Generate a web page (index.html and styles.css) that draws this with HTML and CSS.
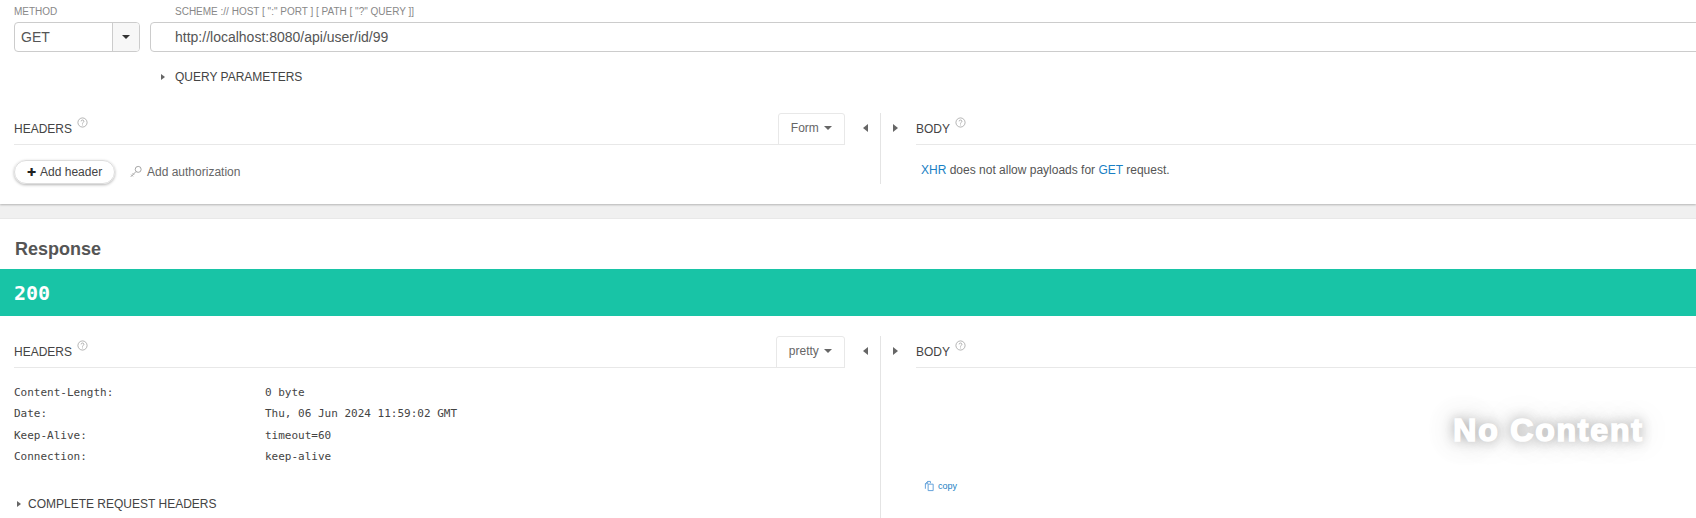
FILE: index.html
```html
<!DOCTYPE html>
<html lang="en">
<head>
<meta charset="utf-8">
<title>Response</title>
<link rel="stylesheet" href="styles.css">
</head>
<body>
<section class="request">
  <div class="url-row">
    <div class="method">
      <div class="label">METHOD</div>
      <div class="select"><span class="select-value">GET</span><span class="select-btn"><i class="caret"></i></span></div>
    </div>
    <div class="url">
      <div class="label url-label">SCHEME :// HOST [ ":" PORT ] [ PATH [ "?" QUERY ]]</div>
      <div class="url-input">http://localhost:8080/api/user/id/99</div>
    </div>
  </div>
  <div class="query"><i class="tri-right small"></i><span>QUERY PARAMETERS</span></div>
  <div class="split split-req">
    <div class="pane-left">
      <div class="pane-main">
        <div class="pane-head">
          <span class="pane-title">HEADERS</span>
          <svg class="help" viewBox="0 0 12 12"><circle cx="6" cy="6" r="5" /><path d="M4.5 4.8a1.5 1.5 0 1 1 2.2 1.3c-.5.3-.7.5-.7 1.1M6 8.2v1" /></svg>
          <span class="tab">Form <i class="caret grey"></i></span>
        </div>
        <div class="actions">
          <span class="add-btn"><b class="plus">✚</b>Add header</span>
          <svg class="key" viewBox="0 0 16 16"><circle cx="10.5" cy="5" r="3.4"/><path d="M8 7.5 2 13.5M2.5 11l2 2M4.2 9.5l1.6 1.6"/></svg>
          <span class="auth">Add authorization</span>
        </div>
      </div>
      <div class="toggle toggle-l"><i class="tri-left"></i></div>
    </div>
    <div class="pane-right">
      <div class="toggle toggle-r"><i class="tri-right"></i></div>
      <div class="pane-main grow">
        <div class="pane-head">
          <span class="pane-title">BODY</span>
          <svg class="help" viewBox="0 0 12 12"><circle cx="6" cy="6" r="5" /><path d="M4.5 4.8a1.5 1.5 0 1 1 2.2 1.3c-.5.3-.7.5-.7 1.1M6 8.2v1" /></svg>
        </div>
        <p class="xhr"><a>XHR</a> does not allow payloads for <a>GET</a> request.</p>
      </div>
    </div>
  </div>
</section>
<div class="band"></div>
<section class="response">
  <h2 class="resp-title">Response</h2>
  <div class="status">200</div>
  <div class="split split-res">
    <div class="pane-left">
      <div class="pane-main">
        <div class="pane-head">
          <span class="pane-title">HEADERS</span>
          <svg class="help" viewBox="0 0 12 12"><circle cx="6" cy="6" r="5" /><path d="M4.5 4.8a1.5 1.5 0 1 1 2.2 1.3c-.5.3-.7.5-.7 1.1M6 8.2v1" /></svg>
          <span class="tab tab-wide">pretty <i class="caret grey"></i></span>
        </div>
        <dl class="rows">
          <dt>Content-Length:</dt><dd>0 byte</dd>
          <dt>Date:</dt><dd>Thu, 06 Jun 2024 11:59:02 GMT</dd>
          <dt>Keep-Alive:</dt><dd>timeout=60</dd>
          <dt>Connection:</dt><dd>keep-alive</dd>
        </dl>
        <div class="complete"><i class="tri-right small"></i><span>COMPLETE REQUEST HEADERS</span></div>
      </div>
      <div class="toggle toggle-l"><i class="tri-left"></i></div>
    </div>
    <div class="pane-right">
      <div class="toggle toggle-r"><i class="tri-right"></i></div>
      <div class="pane-main grow">
        <div class="pane-head">
          <span class="pane-title">BODY</span>
          <svg class="help" viewBox="0 0 12 12"><circle cx="6" cy="6" r="5" /><path d="M4.5 4.8a1.5 1.5 0 1 1 2.2 1.3c-.5.3-.7.5-.7 1.1M6 8.2v1" /></svg>
        </div>
        <div class="body-view">
          <div class="copy">
            <svg class="copy-icon" viewBox="0 0 12 12"><path d="M1.5 9V3.5L4 1h3v2"/><path d="M4.5 4h5.5v7H4.5z"/><path d="M4 1v2.500H1.500"/></svg>
            <span>copy</span>
          </div>
          <div class="no-content"><span>No Content</span></div>
        </div>
      </div>
    </div>
  </div>
</section>
</body>
</html>
```
FILE: styles.css
```css
* { box-sizing: border-box; }
html, body { margin: 0; height: 518px; overflow: hidden; background: #fff; }
body { font-family: "Liberation Sans", Arial, sans-serif; color: #555; font-size: 12px; }

.request { height: 204px; box-shadow: 0 1px 2px rgba(0,0,0,.25); position: relative; background: #fff; }
.url-row { display: flex; padding: 6px 0 0 14px; }
.method { width: 126px; flex: none; }
.label { font-size: 10px; line-height: 12px; height: 16px; color: #888; }
.select { display: flex; height: 30px; border: 1px solid #ccc; border-radius: 4px; font-size: 14px; line-height: 29px; }
.select-value { flex: 1; padding-left: 6px; }
.select-btn { width: 27px; border-left: 1px solid #ccc; background: #f7f7f7; border-radius: 0 3px 3px 0; display: flex; align-items: center; justify-content: center; }
.caret { display: block; width: 0; height: 0; border: 4px solid transparent; border-top-color: #333; border-bottom-width: 0; }
.caret.grey { display: inline-block; border-top-color: #666; margin-left: 2px; vertical-align: 2px; }
.url { flex: 1; margin-left: 10px; margin-right: -20px; }
.url-label { padding-left: 25px; }
.url-input { height: 30px; border: 1px solid #ccc; border-radius: 4px; padding-left: 24px; font-size: 14px; line-height: 29px; color: #555; }
.query { display: flex; align-items: center; height: 14px; margin: 18px 0 0 161px; color: #444; }
.query span { margin-left: 10px; }
.tri-right, .tri-left { display: block; width: 0; height: 0; border-top: 4.500px solid transparent; border-bottom: 4.500px solid transparent; }
.tri-right { border-left: 5px solid #666; }
.tri-left { border-right: 5px solid #666; }
.tri-right.small { border-top-width: 3.500px; border-bottom-width: 3.500px; border-left-width: 4px; }

.split { display: flex; }
.split-req { margin-top: 29px; height: 71px; }
.split-res { margin-top: 20px; height: 182px; }
.pane-left { width: 881px; flex: none; display: flex; padding-left: 14px; border-right: 1px solid #e4e4e4; }
.pane-right { flex: 1; display: flex; min-width: 0; }
.pane-main { width: 831px; flex: none; }
.pane-main.grow { flex: 1; width: auto; }
.toggle { width: 35px; height: 30px; flex: none; display: flex; align-items: center; justify-content: center; }
.toggle-l { padding-left: 6px; }
.toggle-r { padding-right: 6px; }
.pane-head { height: 32px; border-bottom: 1px solid #e8e8e8; display: flex; align-items: flex-start; position: relative; }
.pane-title { font-size: 12px; line-height: 14px; margin-top: 9px; color: #444; }
.help { width: 11px; height: 11px; margin: 4px 0 0 5px; fill: none; stroke: #999; stroke-width: .8; }
.tab { margin-left: auto; width: 67px; height: 32px; border: 1px solid #e8e8e8; border-radius: 3px 3px 0 0; font-size: 12px; line-height: 29px; text-align: center; color: #666; }
.tab-wide { width: 69px; }

.actions { display: flex; align-items: center; height: 24px; margin-top: 15px; }
.add-btn { width: 101px; height: 24px; border: 1px solid #ddd; border-radius: 12px; box-shadow: 0 1px 3px rgba(0,0,0,.3); display: flex; align-items: center; justify-content: center; color: #444; font-size: 12px; }
.plus { font-size: 11px; color: #222; margin-right: 4px; font-family: "DejaVu Sans", sans-serif; }
.key { width: 14px; height: 14px; margin-left: 14px; fill: none; stroke: #999; stroke-width: 1; }
.auth { margin-left: 4px; color: #666; font-size: 12px; }
.xhr { margin: 18px 0 0 5px; font-size: 12px; line-height: 14px; color: #555; }
.xhr a { color: #1a7fc4; }

.band { height: 15px; background: #f0f0f0; border-bottom: 1px solid #e8e8e8; }
.response { background: #fff; }
.resp-title { margin: 0; font-size: 18px; line-height: 22px; padding: 19px 0 0 15px; height: 50px; color: #555; font-weight: bold; }
.status { height: 47px; background: #18c4a6; color: #fff; font-family: "DejaVu Sans Mono", monospace; font-weight: bold; font-size: 20px; line-height: 48px; padding-left: 14px; }

.rows { display: grid; grid-template-columns: 251px 1fr; margin: 14px 0 0; font-family: "DejaVu Sans Mono", monospace; font-size: 11px; line-height: 21.300px; color: #444; }
.rows dd { margin: 0; }
.complete { display: flex; align-items: center; margin: 30px 0 0 3px; height: 14px; color: #444; }
.complete span { margin-left: 7px; }

.body-view { position: relative; height: 150px; }
.copy { position: absolute; left: 8px; top: 112px; display: flex; align-items: center; color: #1a7fc4; font-size: 9px; }
.copy-icon { width: 11px; height: 12px; margin-right: 3px; fill: none; stroke: #5a9bd8; stroke-width: 1; }
.no-content { position: absolute; right: 6px; top: 15px; width: 305px; height: 92px; overflow: hidden; display: flex; align-items: center; justify-content: center; padding: 3px 0 0 22px; }
.no-content span { font-size: 32px; font-weight: bold; letter-spacing: 1.800px; color: #fff; -webkit-text-stroke: 1.600px #fff; text-shadow: 0 0 12px #999, 0 0 28px #bbb, 0 0 60px #ddd; }
```
